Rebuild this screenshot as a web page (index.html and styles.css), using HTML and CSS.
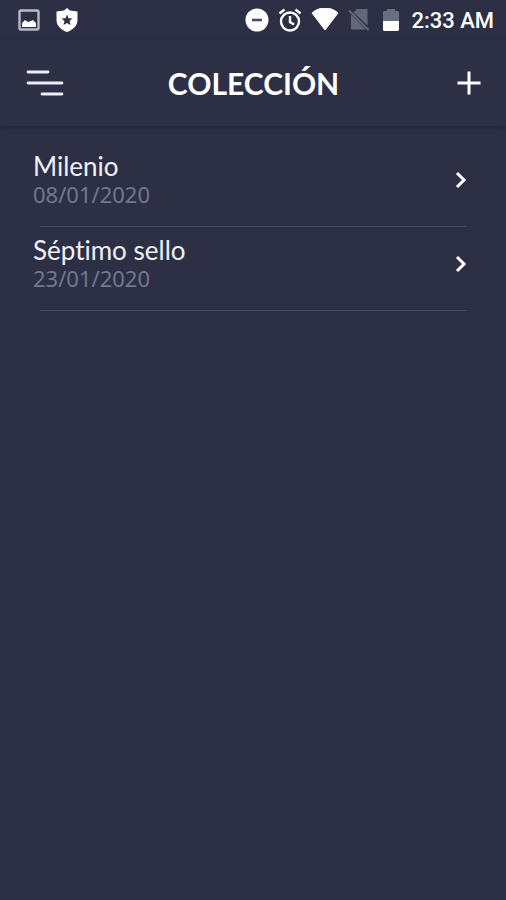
FILE: index.html
```html
<!DOCTYPE html>
<html lang="es">
<head>
<meta charset="utf-8">
<meta name="viewport" content="width=device-width, initial-scale=1">
<title>Colección</title>
<link rel="stylesheet" href="styles.css">
</head>
<body>
<div class="status">
  <div class="status-group status-left">
    <svg width="22" height="22" viewBox="0 0 22 22" aria-hidden="true">
      <rect x="1.5" y="1.5" width="19" height="19" rx="1.5" fill="none" stroke="#b9bac5" stroke-width="2.4"/>
      <path d="M4 18v-4l3-3 3 2 3-1 2-1 3 3v4z" fill="#fff"/>
    </svg>
    <svg width="22" height="24" viewBox="0 0 22 24" aria-hidden="true">
      <path fill="#fff" fill-rule="evenodd" d="M11 0l3 2.600L21.500 3.500V12c0 5.500-4.500 10-10.500 12C5 22 .5 17.500.5 12V3.500L8 2.600zM11 6.500l-1.500 3.700-4 .3 3 2.600-1 4L11 15l3.500 2.100-1-4 3-2.600-4-.3z"/>
    </svg>
  </div>
  <div class="status-group status-right">
    <svg width="24" height="24" viewBox="0 0 24 24" aria-hidden="true">
      <circle cx="12" cy="12" r="11.500" fill="#fff"/>
      <path d="M7 12h10" stroke="#4b4d63" stroke-width="2.600"/>
    </svg>
    <svg width="24" height="24" viewBox="0 0 24 24" fill="none" stroke="#fff" aria-hidden="true">
      <circle cx="12" cy="13.500" r="9" stroke-width="2.400"/>
      <path d="M1.500 5.500L6.500 1.500M22.500 5.500L17.500 1.500M12 8v6l4 2.500" stroke-width="2.400"/>
    </svg>
    <svg class="wifi" width="28" height="24" viewBox="0 0 28 24" aria-hidden="true">
      <path d="M14 22L1 5C5 1.500 9 0 14 0s9 1.500 13 5z" fill="#fff" stroke="#fff" stroke-linejoin="round"/>
    </svg>
    <svg width="22" height="24" viewBox="0 0 22 24" aria-hidden="true">
      <path d="M9 1h9.500q1 0 1 1v15.500L5.500 4.500zM3 6.500L18 21.500H4q-1 0-1-1z" fill="#64667a"/>
      <path d="M1 2.500L20.500 22" stroke="#64667a" stroke-width="2"/>
    </svg>
    <svg class="battery" width="16" height="24" viewBox="0 0 16 24" aria-hidden="true">
      <path d="M0 13V4l1-1h3V1h8v2h3l1 1v9z" fill="#6b6d80"/>
      <path d="M0 13h16v9l-1 1H1l-1-1z" fill="#fff"/>
    </svg>
    <time class="clock">2:33 AM</time>
  </div>
</div>
<header class="bar">
  <button class="icon-button" type="button" aria-label="Menú">
    <svg width="38" height="28" viewBox="0 0 38 28" aria-hidden="true">
      <path d="M2 3H22M2 14H36M16 25H36" fill="none" stroke="#edeef5" stroke-width="2.800" stroke-linecap="round"/>
    </svg>
  </button>
  <h1 class="title">COLECCIÓN</h1>
  <button class="icon-button icon-button-end" type="button" aria-label="Añadir">
    <svg width="24" height="24" viewBox="0 0 24 24" aria-hidden="true">
      <path d="M12 0.500V23.500M0.500 12H23.500" stroke="#fff" stroke-width="3"/>
    </svg>
  </button>
</header>
<main>
  <ul class="list">
    <li class="item">
      <a class="entry" href="#milenio">
        <span class="texts"><span class="name">Milenio</span><time class="date">08/01/2020</time></span>
        <svg width="12" height="18" viewBox="0 0 12 18" aria-hidden="true"><path d="M2 2L9 9L2 16" fill="none" stroke="#fff" stroke-width="3"/></svg>
      </a>
    </li>
    <li class="item">
      <a class="entry" href="#septimo-sello">
        <span class="texts"><span class="name">Séptimo sello</span><time class="date">23/01/2020</time></span>
        <svg width="12" height="18" viewBox="0 0 12 18" aria-hidden="true"><path d="M2 2L9 9L2 16" fill="none" stroke="#fff" stroke-width="3"/></svg>
      </a>
    </li>
  </ul>
</main>
</body>
</html>
```
FILE: styles.css
```css
* {
  box-sizing: border-box;
}

body {
  margin: 0;
  min-height: 100vh;
  background: #2d2f45;
  color: #f0f1f7;
  font-family: Lato, "Noto Sans", sans-serif;
  font-variant-ligatures: none;
}

svg {
  display: block;
  flex: none;
}

.status {
  display: flex;
  justify-content: space-between;
  height: 40px;
  padding: 0 12px 0 18px;
}

.status-group {
  display: flex;
  align-items: center;
}

.status-left {
  gap: 16px;
}

.status-right {
  gap: 9px;
}

.battery {
  margin-left: 4px;
}

.clock {
  margin-left: 3px;
  padding-top: 2px;
  font: 500 22px/38px Roboto, sans-serif;
  color: #fff;
}

.bar {
  display: grid;
  grid-template-columns: 1fr auto 1fr;
  align-items: center;
  height: 86px;
  padding: 0 25px 0 26px;
  box-shadow: 0 2px 5px #232538;
}

.icon-button {
  display: flex;
  justify-self: start;
  padding: 0;
  border: 0;
  background: none;
  cursor: pointer;
}

.icon-button-end {
  justify-self: end;
}

.title {
  margin: 0;
  color: #fff;
  font-size: 30px;
  font-weight: 700;
  line-height: 32px;
}

.list {
  margin: 0;
  padding: 17px 0 0;
  list-style: none;
}

.item::after {
  content: "";
  display: block;
  height: 1px;
  margin: 0 39px 0 40px;
  background: #484c62;
}

.entry {
  display: flex;
  align-items: center;
  justify-content: space-between;
  height: 83px;
  padding: 0 39px 9px 33px;
  color: inherit;
  text-decoration: none;
}

.texts {
  display: flex;
  flex-direction: column;
}

.name {
  font-size: 26px;
  line-height: 28px;
}

.date {
  color: #70788f;
  font: 22px/28px "Noto Sans", sans-serif;
}
```
